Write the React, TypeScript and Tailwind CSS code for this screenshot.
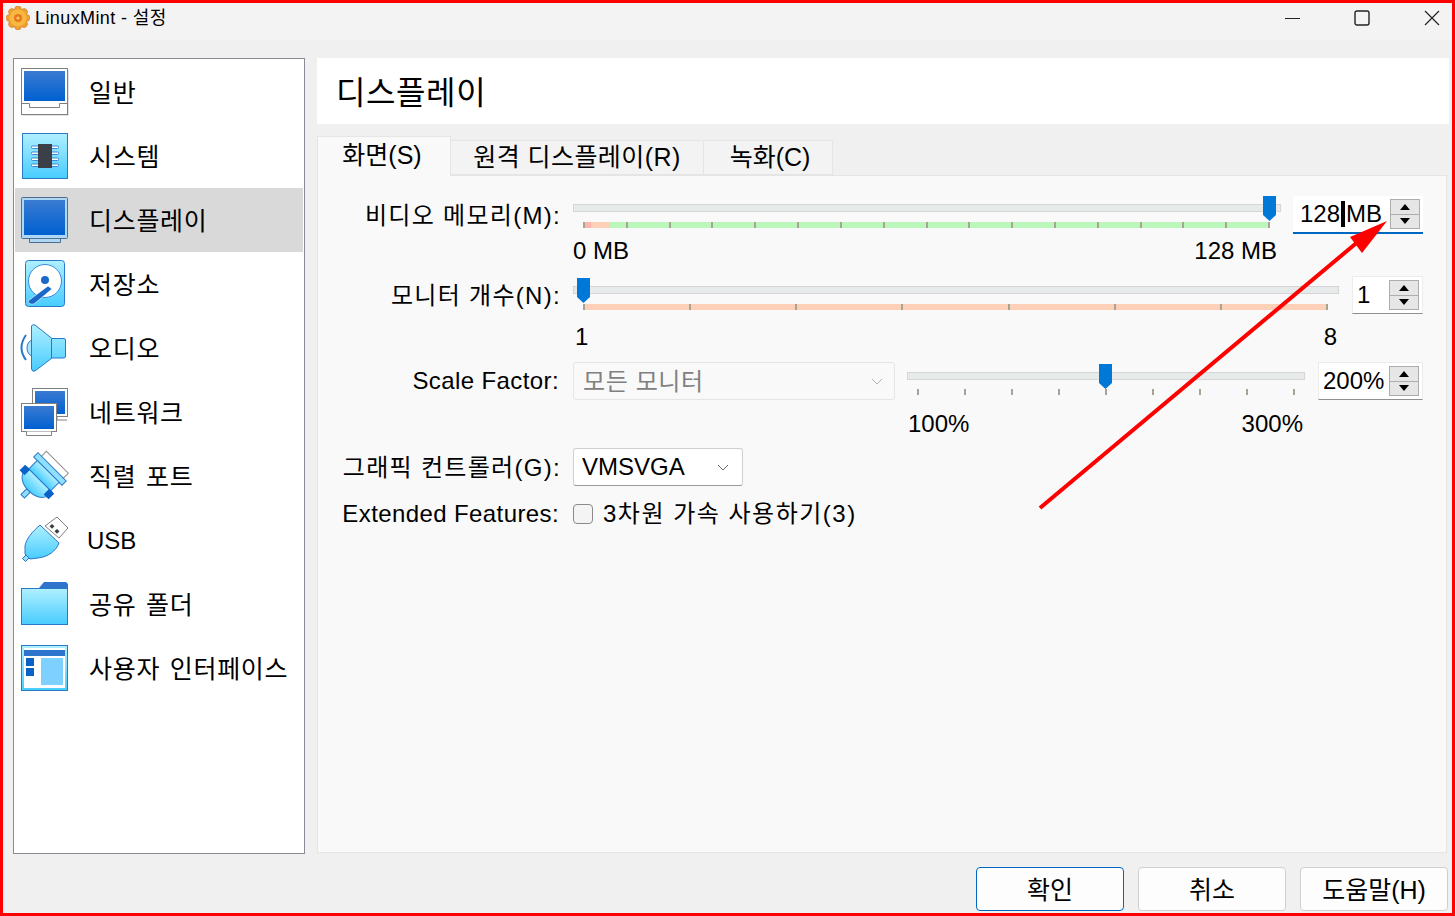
import React from 'react';

const Grad: React.FC<{ id: string; from: string; to: string }> = ({ id, from, to }) => (
  <linearGradient id={id} x1="0" y1="0" x2="0" y2="1">
    <stop offset="0" stopColor={from} />
    <stop offset="1" stopColor={to} />
  </linearGradient>
);

// shared gradients for the sidebar icons
const IconDefs = () => (
  <svg width="0" height="0" className="absolute">
    <defs>
      <Grad id="screen" from="#3a7bd2" to="#0060d0" />
      <Grad id="sky" from="#b0f0ff" to="#48ccff" />
    </defs>
  </svg>
);

const Svg: React.FC<{ children: React.ReactNode }> = ({ children }) => (
  <svg width="50" height="50" viewBox="0 0 50 50" className="block overflow-visible">
    {children}
  </svg>
);

const GeneralIcon = () => (
  <Svg>
    <rect x="2.5" y="2.5" width="46" height="46" fill="#c8c8c8" />
    <rect x="1.5" y="1.5" width="46" height="46" fill="#fff" stroke="#808080" />
    <rect x="4" y="4" width="41" height="30" fill="url(#screen)" />
    <path d="M1.5 36.5H9.5V40.5H39.5V36.5H47.5" fill="none" stroke="#808080" />
  </Svg>
);

const SystemIcon = () => (
  <Svg>
    <rect x="2.5" y="2.5" width="45" height="45" fill="url(#sky)" stroke="#2a78c8" />
    {[15, 21, 27, 33].map((y) => (
      <rect key={y} x="11.5" y={y} width="27" height="2.5" rx="1" fill="#fff" stroke="#3a8ad8" />
    ))}
    <rect x="18" y="13" width="14" height="24" fill="#3a3f48" />
  </Svg>
);

const DisplayIcon = () => (
  <Svg>
    <path d="M9.5 42.5V47.5H40.5V42.5" fill="#aed6f5" stroke="#4a6f90" />
    <rect x="1.5" y="2.5" width="46" height="41" rx="1" fill="#aed6f5" stroke="#4a6f90" />
    <rect x="4" y="5" width="41" height="35" fill="url(#screen)" />
  </Svg>
);

const StorageIcon = () => (
  <Svg>
    <rect x="5.5" y="1.5" width="39" height="46" rx="3" fill="url(#sky)" stroke="#2a78c8" />
    <circle cx="25" cy="22" r="16.5" fill="#fff" stroke="#3a8ad8" />
    <circle cx="25" cy="21" r="4" fill="#1a68c8" />
    <path d="M28 27L32 30L14 45Q9 46 8 42Z" fill="#1a68c8" stroke="#fff" strokeWidth="0.6" />
  </Svg>
);

const AudioIcon = () => (
  <Svg>
    <path d="M6 12Q-3 25 6 37" fill="none" stroke="#2a78c8" strokeWidth="2" />
    <path d="M12 17Q7 19 7 25Q7 31 12 33Z" fill="#a8e6ff" stroke="#2a78c8" />
    <path
      d="M11.5 3Q12 1 15 2L32 15.5H44Q45.5 15.5 45.5 17V33Q45.5 35 44 35H32L15 48Q12 49 11.5 46Z"
      fill="url(#sky)"
      stroke="#2a78c8"
    />
    <path d="M31.5 15.5V35" stroke="#2a78c8" />
  </Svg>
);

const NetworkIcon = () => (
  <Svg>
    <rect x="12.5" y="1.5" width="35" height="28" fill="#fff" stroke="#808080" />
    <path d="M37 29.5V33H47" fill="none" stroke="#808080" />
    <rect x="15" y="4" width="30" height="23" fill="url(#screen)" />
    <rect x="1.5" y="16.5" width="35" height="28" fill="#fff" stroke="#808080" />
    <path d="M6.5 44.5V48.5H31.5V44.5" fill="#fff" stroke="#808080" />
    <rect x="4" y="19" width="30" height="23" fill="url(#screen)" />
  </Svg>
);

const SerialIcon = () => (
  <Svg>
    <g transform="rotate(45 25 25)">
      <rect x="8.5" y="6.5" width="31" height="8" fill="#fff" stroke="#909090" />
      <rect x="3.5" y="13.5" width="40" height="6" fill="#8fe0ff" stroke="#2a78c8" />
      <rect x="8.5" y="19.5" width="31" height="12" fill="url(#sky)" stroke="#2a78c8" />
      <path d="M6 31.5H42V35Q39 47 24 47Q9 47 6 35Z" fill="url(#sky)" stroke="#2a78c8" />
      <rect x="3" y="31" width="7" height="8" fill="#0a62c8" />
      <rect x="37" y="31" width="7" height="8" fill="#0a62c8" />
      <rect x="21" y="47" width="5" height="8" fill="#8fe0ff" stroke="#2a78c8" />
    </g>
  </Svg>
);

const UsbIcon = () => (
  <Svg>
    <path d="M25 11L37 2L48 13L39 23Z" fill="#fff" stroke="#808080" />
    <rect x="30.5" y="9.5" width="3.5" height="3.5" fill="#3a3f48" transform="rotate(45 32 11)" />
    <rect x="35.5" y="14.5" width="3.5" height="3.5" fill="#3a3f48" transform="rotate(45 37 16)" />
    <path d="M20 10L39 28C36 36 28 42 18 43L10 44L5 39V31C6 24 12 17 20 10Z" fill="url(#sky)" stroke="#2a78c8" />
    <path d="M6 40L2.5 43.5L5.5 46.5L9 43Z" fill="#8fe0ff" stroke="#2a78c8" />
  </Svg>
);

const FolderIcon = () => (
  <Svg>
    <path d="M19 9L24 3H46L48 5V10H19Z" fill="#2f74cc" />
    <rect x="1.5" y="9.5" width="46" height="36" fill="url(#sky)" stroke="#2a78c8" />
  </Svg>
);

const InterfaceIcon = () => (
  <Svg>
    <rect x="1.5" y="2.5" width="46" height="45" fill="url(#sky)" stroke="#2a78c8" />
    <rect x="4" y="5" width="41" height="40" fill="#fff" />
    <rect x="4" y="7" width="41" height="6" fill="#2f74cc" />
    <rect x="6" y="15" width="8" height="8" fill="#0a62c8" />
    <rect x="6" y="25" width="8" height="8" fill="#0a62c8" />
    <rect x="21" y="15" width="22" height="27" fill="#7dd0ff" />
  </Svg>
);

const navItems: { label: string; icon: React.ReactNode; active?: boolean; latin?: boolean }[] = [
  { label: '일반', icon: <GeneralIcon /> },
  { label: '시스템', icon: <SystemIcon /> },
  { label: '디스플레이', icon: <DisplayIcon />, active: true },
  { label: '저장소', icon: <StorageIcon /> },
  { label: '오디오', icon: <AudioIcon /> },
  { label: '네트워크', icon: <NetworkIcon /> },
  { label: '직렬 포트', icon: <SerialIcon /> },
  { label: 'USB', icon: <UsbIcon />, latin: true },
  { label: '공유 폴더', icon: <FolderIcon /> },
  { label: '사용자 인터페이스', icon: <InterfaceIcon /> },
];

const AppLogo = () => (
  <svg width="24" height="24" viewBox="0 0 24 24" className="shrink-0">
    {[0, 45, 90, 135, 180, 225, 270, 315].map((a) => (
      <circle key={a} cx="12" cy="3.5" r="3.4" fill="#f0a030" stroke="#c87020" strokeWidth="0.5" transform={`rotate(${a} 12 12)`} />
    ))}
    <circle cx="12" cy="12" r="8.5" fill="#f8b840" />
    <circle cx="12" cy="12" r="4" fill="#e87820" />
    <circle cx="12" cy="12" r="1.6" fill="#f8c860" />
  </svg>
);

const SpinButtons = () => (
  <div className="w-[30px] h-[30px] mr-[3px] shrink-0 flex flex-col border border-[#adadad] bg-[#e6e6e6]">
    <div className="flex-1 flex items-center justify-center border-b border-[#adadad]">
      <svg width="10" height="6" viewBox="0 0 10 6"><path d="M0 6L5 0L10 6Z" fill="#000" /></svg>
    </div>
    <div className="flex-1 flex items-center justify-center">
      <svg width="10" height="6" viewBox="0 0 10 6"><path d="M0 0L5 6L10 0Z" fill="#000" /></svg>
    </div>
  </div>
);

const Thumb: React.FC<{ left: number; top: number }> = ({ left, top }) => (
  <svg
    width="13"
    height="25"
    viewBox="0 0 13 25"
    className="absolute"
    style={{ left, top }}
  >
    <path d="M0 0H13V19L6.5 25L0 19Z" fill="#0078d7" />
  </svg>
);

const Ticks: React.FC<{ count: number; className?: string }> = ({ count, className }) => (
  <div className={`flex justify-between ${className ?? ''}`}>
    {Array.from({ length: count }).map((_, i) => (
      <span key={i} className="block w-[2px] h-[6px] bg-[#a8a493]" />
    ))}
  </div>
);

const Track = () => <div className="h-2 bg-[#e7eaea] border border-[#d6d6d6]" />;

// korean labels run wider than the font here, so they get their own tracking
const Label: React.FC<{ children: React.ReactNode; latin?: boolean }> = ({ children, latin }) => (
  <div
    className={`w-[243px] h-[38px] mr-[12px] shrink-0 flex items-center justify-end whitespace-nowrap ${
      latin ? 'tracking-[0.4px] pr-[2px]' : 'tracking-[1.3px] pt-px'
    }`}
  >
    {children}
  </div>
);

const App: React.FC = () => {
  return (
    <div className="relative w-[1455px] h-[916px] border-[3px] border-[#ff0000] bg-[#f0f0f0] overflow-hidden flex flex-col text-[24px] leading-none text-black font-['Liberation_Sans','Noto_Sans_CJK_KR',sans-serif]">
      <IconDefs />

      {/* Title bar */}
      <header className="h-[37px] shrink-0 bg-[#f3f3f3] flex items-center pl-[3px] pb-[7px]">
        <AppLogo />
        <span className="ml-[5px] text-[18px] tracking-[0.4px]">LinuxMint - 설정</span>
        <div className="ml-auto flex items-center h-full pr-[12px] gap-[54px]">
          <svg width="15" height="15" viewBox="0 0 15 15"><path d="M0 7.5H15" stroke="#222" /></svg>
          <svg width="16" height="16" viewBox="0 0 16 16"><rect x="1" y="1" width="14" height="14" rx="2" fill="none" stroke="#222" strokeWidth="1.4" /></svg>
          <svg width="16" height="16" viewBox="0 0 16 16"><path d="M1 1L15 15M15 1L1 15" stroke="#222" strokeWidth="1.2" /></svg>
        </div>
      </header>

      <div className="flex-1 flex min-h-0 pt-[18px] pl-[10px] pr-[3px]">
        {/* Sidebar */}
        <nav className="w-[292px] h-[796px] shrink-0 bg-white border border-[#868b94] p-px">
          {navItems.map((item) => (
            <div
              key={item.label}
              className={`h-[64px] flex items-center pl-[5px] ${item.active ? 'bg-[#d9d9d9]' : ''}`}
            >
              <div className="w-[50px] shrink-0">{item.icon}</div>
              <span
                className={`whitespace-nowrap pt-[2px] ${
                  item.latin ? 'ml-[17px] text-[24px]' : 'ml-[19px] text-[25px] tracking-[0.7px] [word-spacing:2px]'
                }`}
              >
                {item.label}
              </span>
            </div>
          ))}
        </nav>

        {/* Content */}
        <main className="w-[1132px] ml-[12px] flex flex-col">
          <div className="h-[66px] bg-white flex items-center pl-[19px] pt-[3px] text-[32px] tracking-[0.6px]">디스플레이</div>

          <div className="h-[39px] mt-[12px] flex items-end text-[25px] relative z-10">
            <div className="w-[134px] h-[40px] -mb-px bg-[#f9f9f9] border border-[#e5e5e5] border-b-0 flex items-center justify-center pb-[3px] pr-[4px]">화면(S)</div>
            <div className="w-[253px] h-[35px] bg-[#f3f3f3] border border-[#e5e5e5] border-l-0 flex items-center justify-center tracking-[0.45px]">원격 디스플레이(R)</div>
            <div className="w-[129px] h-[35px] bg-[#f3f3f3] border border-[#e5e5e5] border-l-0 flex items-center justify-center pl-[4px]">녹화(C)</div>
          </div>

          <section className="w-[1130px] h-[678px] bg-[#f9f9f9] border border-[#e5e5e5] pt-[20px] pr-[23px]">
            {/* 비디오 메모리 */}
            <div className="h-[80px] flex items-start">
              <Label>비디오 메모리(M):</Label>
              <div className="relative w-[708px] pt-[8px]">
                <Track />
                <div className="relative mx-[10px] mr-[11px] mt-[10px] h-[6px] bg-[#bbf7bb]">
                  <div className="absolute left-0 top-0 h-full w-[27px] bg-[#ffd0b8]" />
                  <div className="absolute left-[1px] top-0 h-full w-[7px] bg-[#ffb4ac]" />
                  <Ticks count={17} className="absolute inset-0" />
                </div>
                <div className="flex justify-between mt-[11px] pr-[4px]">
                  <span>0 MB</span>
                  <span>128 MB</span>
                </div>
                <Thumb left={690} top={0} />
              </div>
              <div className="ml-[12px] w-[130px] h-[38px] bg-white border-b-2 border-[#0067c0] flex items-center justify-between pl-[7px]">
                <span className="flex items-center">
                  128
                  <span className="w-1 h-[26px] bg-black mx-[1px]" />
                  MB
                </span>
                <SpinButtons />
              </div>
            </div>

            {/* 모니터 개수 */}
            <div className="h-[86px] flex items-start">
              <Label>모니터 개수(N):</Label>
              <div className="relative w-[766px] pt-[10px]">
                <Track />
                <div className="relative ml-[10px] mr-[11px] mt-[10px] h-[6px] bg-[#ffd0b8]">
                  <Ticks count={8} className="absolute inset-0" />
                </div>
                <div className="flex justify-between mt-[15px] pl-[2px] pr-[2px]">
                  <span>1</span>
                  <span>8</span>
                </div>
                <Thumb left={4} top={2} />
              </div>
              <div className="ml-[13px] w-[71px] h-[38px] bg-white border border-[#ececec] border-b-[#8f8f8f] flex items-center justify-between pl-[4px]">
                <span>1</span>
                <SpinButtons />
              </div>
            </div>

            {/* Scale Factor */}
            <div className="h-[86px] flex items-start">
              <Label latin>Scale Factor:</Label>
              <div className="w-[322px] h-[38px] shrink-0 border border-[#e5e5e5] rounded-[3px] bg-[#f9f9f9] flex items-center justify-between pl-[9px] pr-[11px] text-[#808080]">
                <span className="pt-px tracking-[0.6px]">모든 모니터</span>
                <svg width="12" height="7" viewBox="0 0 12 7"><path d="M1 1L6 6L11 1" fill="none" stroke="#b0b0b0" /></svg>
              </div>
              <div className="relative w-[398px] ml-[12px] pt-[10px]">
                <Track />
                <Ticks count={9} className="mx-[10px] mt-[9px]" />
                <div className="flex justify-between mt-[17px] pl-[1px] pr-[2px]">
                  <span>100%</span>
                  <span>300%</span>
                </div>
                <Thumb left={192} top={2} />
              </div>
              <div className="ml-[13px] w-[105px] h-[38px] bg-white border border-[#ececec] border-b-[#8f8f8f] flex items-center justify-between pl-[4px]">
                <span>200%</span>
                <SpinButtons />
              </div>
            </div>

            {/* 그래픽 컨트롤러 */}
            <div className="flex items-start">
              <Label>그래픽 컨트롤러(G):</Label>
              <div className="w-[170px] h-[38px] bg-white border border-[#d0d0d0] border-b-[#9a9a9a] rounded-[3px] flex items-center justify-between pl-[8px] pr-[13px]">
                <span>VMSVGA</span>
                <svg width="12" height="7" viewBox="0 0 12 7"><path d="M1 1L6 6L11 1" fill="none" stroke="#666" /></svg>
              </div>
            </div>

            {/* Extended Features */}
            <div className="flex items-start mt-[9px]">
              <Label latin>Extended Features:</Label>
              <div className="h-[38px] flex items-center">
                <span className="w-[20px] h-[20px] rounded-[4px] bg-[#f4f4f4] border border-[#8a8a8a] mr-[10px]" />
                <span className="tracking-[1.5px]">3차원 가속 사용하기(3)</span>
              </div>
            </div>
          </section>
        </main>
      </div>

      {/* Dialog buttons */}
      <footer className="h-[57px] shrink-0 flex justify-end items-start gap-[14px] pt-[11px] pr-[4px] text-[25px]">
        <button className="w-[148px] h-[44px] bg-[#fdfdfd] border border-[#0067c0] rounded-[4px] pt-[2px]">확인</button>
        <button className="w-[148px] h-[44px] bg-[#fdfdfd] border border-[#d0d0d0] rounded-[4px] pt-[2px]">취소</button>
        <button className="w-[148px] h-[44px] bg-[#fdfdfd] border border-[#d0d0d0] rounded-[4px] pt-[2px]">도움말(H)</button>
      </footer>

      {/* Red annotation arrow */}
      <svg width="1455" height="916" viewBox="0 0 1455 916" className="absolute -left-[3px] -top-[3px] pointer-events-none">
        <path d="M1040 508L1360 240" stroke="#ff0000" strokeWidth="4" />
        <path d="M1387 221L1350 237L1362 253Z" fill="#ff0000" />
      </svg>
    </div>
  );
};

export default App;
